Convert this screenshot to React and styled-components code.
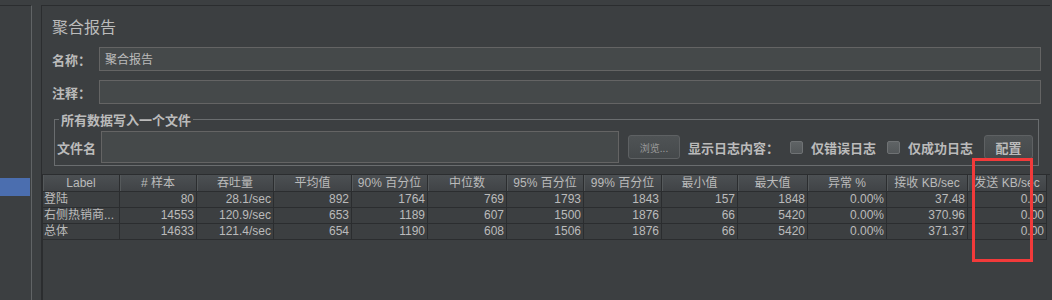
import React from "react";
import styled, { createGlobalStyle } from "styled-components";

const Global = createGlobalStyle`
  html, body { margin: 0; padding: 0; background: #3c3f41; }
  body { font-family: "Liberation Sans", "Noto Sans CJK SC", sans-serif; color: #bbbbbb; }
  * { box-sizing: border-box; }
`;

const Root = styled.div`
  position: relative;
  display: flex;
  width: 1052px;
  height: 300px;
  overflow: hidden;
  background: #3c3f41;
  padding-top: 5px;
`;

const Tree = styled.div`
  width: 32px;
  border-top: 1px solid #2b2d2f;
  border-right: 1px solid #616466;
  padding-top: 172px;
`;

const TreeSelected = styled.div`
  width: 30px;
  height: 18px;
  background: #4b6eaf;
`;

const Panel = styled.div`
  flex: 1;
  margin-left: 9px;
  margin-right: 2px;
  border-top: 1px solid #2b2d2f;
  border-left: 1px solid #2b2d2f;
  display: flex;
  flex-direction: column;
`;

const Title = styled.div`
  margin: 10px 0 0 10px;
  height: 20px;
  line-height: 20px;
  font-size: 16px;
  font-family: "Noto Sans CJK SC", sans-serif;
  color: #bbbbbb;
`;

const FieldRow = styled.div`
  display: flex;
  align-items: center;
  margin: ${(p) => p.$top}px 9px 0 10px;
`;

const Label = styled.div`
  width: ${(p) => p.$w}px;
  flex: none;
  font-size: 13px;
  font-weight: bold;
  font-family: "Noto Sans CJK SC", sans-serif;
  color: #bbbbbb;
  white-space: nowrap;
  margin-left: ${(p) => p.$ml || 0}px;
`;

const TextField = styled.div`
  flex: 1;
  height: ${(p) => p.$h}px;
  background: #45494a;
  border: 1px solid #646464;
  padding-left: 5px;
  font-size: 12px;
  line-height: ${(p) => p.$h - 2}px;
  font-family: "Noto Sans CJK SC", sans-serif;
  color: #bbbbbb;
  margin-left: ${(p) => p.$ml || 0}px;
`;

const Group = styled.fieldset`
  margin: 8px 11px 0 12px;
  padding: 4px 5px 2px 2px;
  border: 1px solid #6a6d6f;
  min-width: 0;
`;

const Legend = styled.legend`
  padding: 0 2px 0 2px;
  margin-left: 2px;
  font-size: 13px;
  line-height: 15px;
  font-weight: bold;
  font-family: "Noto Sans CJK SC", sans-serif;
  color: #bbbbbb;
`;

const GroupRow = styled.div`
  display: flex;
  align-items: center;
  height: 32px;
`;

const Button = styled.div`
  flex: none;
  width: ${(p) => p.$w}px;
  height: ${(p) => p.$h}px;
  margin-left: ${(p) => p.$ml}px;
  background: linear-gradient(#4f5355, #45494b);
  border: 1px solid #5e6163;
  border-radius: 3px;
  display: flex;
  align-items: center;
  justify-content: center;
  font-family: "Noto Sans CJK SC", sans-serif;
  font-size: ${(p) => p.$fs}px;
  font-weight: ${(p) => (p.$bold ? "bold" : "normal")};
  color: ${(p) => (p.$bold ? "#bbbbbb" : "#9a9a9a")};
`;

const Check = styled.div`
  flex: none;
  width: 13px;
  height: 13px;
  margin-left: ${(p) => p.$ml}px;
  background: linear-gradient(#5f6365, #54585a);
  border: 1px solid #6f7274;
  border-radius: 2px;
`;

const TableBox = styled.div`
  flex: 1;
  margin-top: 8px;
  border-top: 1px solid #2b2d2f;
  border-left: 1px solid #2b2d2f;
  background: #3c3f41;
`;

const Row = styled.div`
  display: grid;
  grid-template-columns: ${(p) => p.$cols};
  width: 1004px;
`;

const HeadCell = styled.div`
  height: 17px;
  line-height: 16px;
  text-align: center;
  font-size: 12px;
  font-family: "Liberation Sans", "Noto Sans CJK SC", sans-serif;
  color: #bbbbbb;
  background: linear-gradient(#4c5053, #404346);
  border-right: 1px solid #2b2d2f;
  border-bottom: 1px solid #2b2d2f;
  box-shadow: inset 1px 0 0 #55595b;
  white-space: nowrap;
  overflow: hidden;
`;

const Cell = styled.div`
  height: 16px;
  line-height: 15px;
  padding: 0 2px 0 1px;
  text-align: ${(p) => p.$align};
  font-size: 12px;
  font-family: "Liberation Sans", "Noto Sans CJK SC", sans-serif;
  color: #bbbbbb;
  border-right: 1px solid #2b2d2f;
  border-bottom: 1px solid #2b2d2f;
  white-space: nowrap;
  overflow: hidden;
`;

const Highlight = styled.div`
  position: absolute;
  left: 972px;
  top: 158px;
  width: 61px;
  height: 104px;
  border: 3px solid #f23a3a;
`;

const cols = [
  ["Label", 77],
  ["# 样本", 77],
  ["吞吐量", 77],
  ["平均值", 78],
  ["90% 百分位", 76],
  ["中位数", 79],
  ["95% 百分位", 77],
  ["99% 百分位", 78],
  ["最小值", 76],
  ["最大值", 70],
  ["异常 %", 79],
  ["接收 KB/sec", 81],
  ["发送 KB/sec", 79],
];

const rows = [
  ["登陆", "80", "28.1/sec", "892", "1764", "769", "1793", "1843", "157", "1848", "0.00%", "37.48", "0.00"],
  ["右侧热销商...", "14553", "120.9/sec", "653", "1189", "607", "1500", "1876", "66", "5420", "0.00%", "370.96", "0.00"],
  ["总体", "14633", "121.4/sec", "654", "1190", "608", "1506", "1876", "66", "5420", "0.00%", "371.37", "0.00"],
];

const template = cols.map((c) => `${c[1]}px`).join(" ");

export default function App() {
  return (
    <>
      <Global />
      <Root>
        <Tree>
          <TreeSelected />
        </Tree>
        <Panel>
          <Title>聚合报告</Title>
          <FieldRow $top={11}>
            <Label $w={47}>名称：</Label>
            <TextField $h={24}>聚合报告</TextField>
          </FieldRow>
          <FieldRow $top={9}>
            <Label $w={47}>注释：</Label>
            <TextField $h={24} />
          </FieldRow>
          <Group>
            <Legend>所有数据写入一个文件</Legend>
            <GroupRow>
              <Label $w={39}>文件名</Label>
              <TextField $h={32} $ml={5} />
              <Button $w={52} $h={24} $ml={9} $fs={10}>浏览...</Button>
              <Label $w={91} $ml={8}>显示日志内容：</Label>
              <Check $ml={11} />
              <Label $w={65} $ml={8}>仅错误日志</Label>
              <Check $ml={11} />
              <Label $w={65} $ml={8}>仅成功日志</Label>
              <Button $w={49} $h={24} $ml={11} $fs={13} $bold>配置</Button>
            </GroupRow>
          </Group>
          <TableBox>
            <Row $cols={template}>
              {cols.map((c) => (
                <HeadCell key={c[0]}>{c[0]}</HeadCell>
              ))}
            </Row>
            {rows.map((r, i) => (
              <Row key={i} $cols={template}>
                {r.map((v, j) => (
                  <Cell key={j} $align={j === 0 ? "left" : "right"}>{v}</Cell>
                ))}
              </Row>
            ))}
          </TableBox>
        </Panel>
        <Highlight />
      </Root>
    </>
  );
}
